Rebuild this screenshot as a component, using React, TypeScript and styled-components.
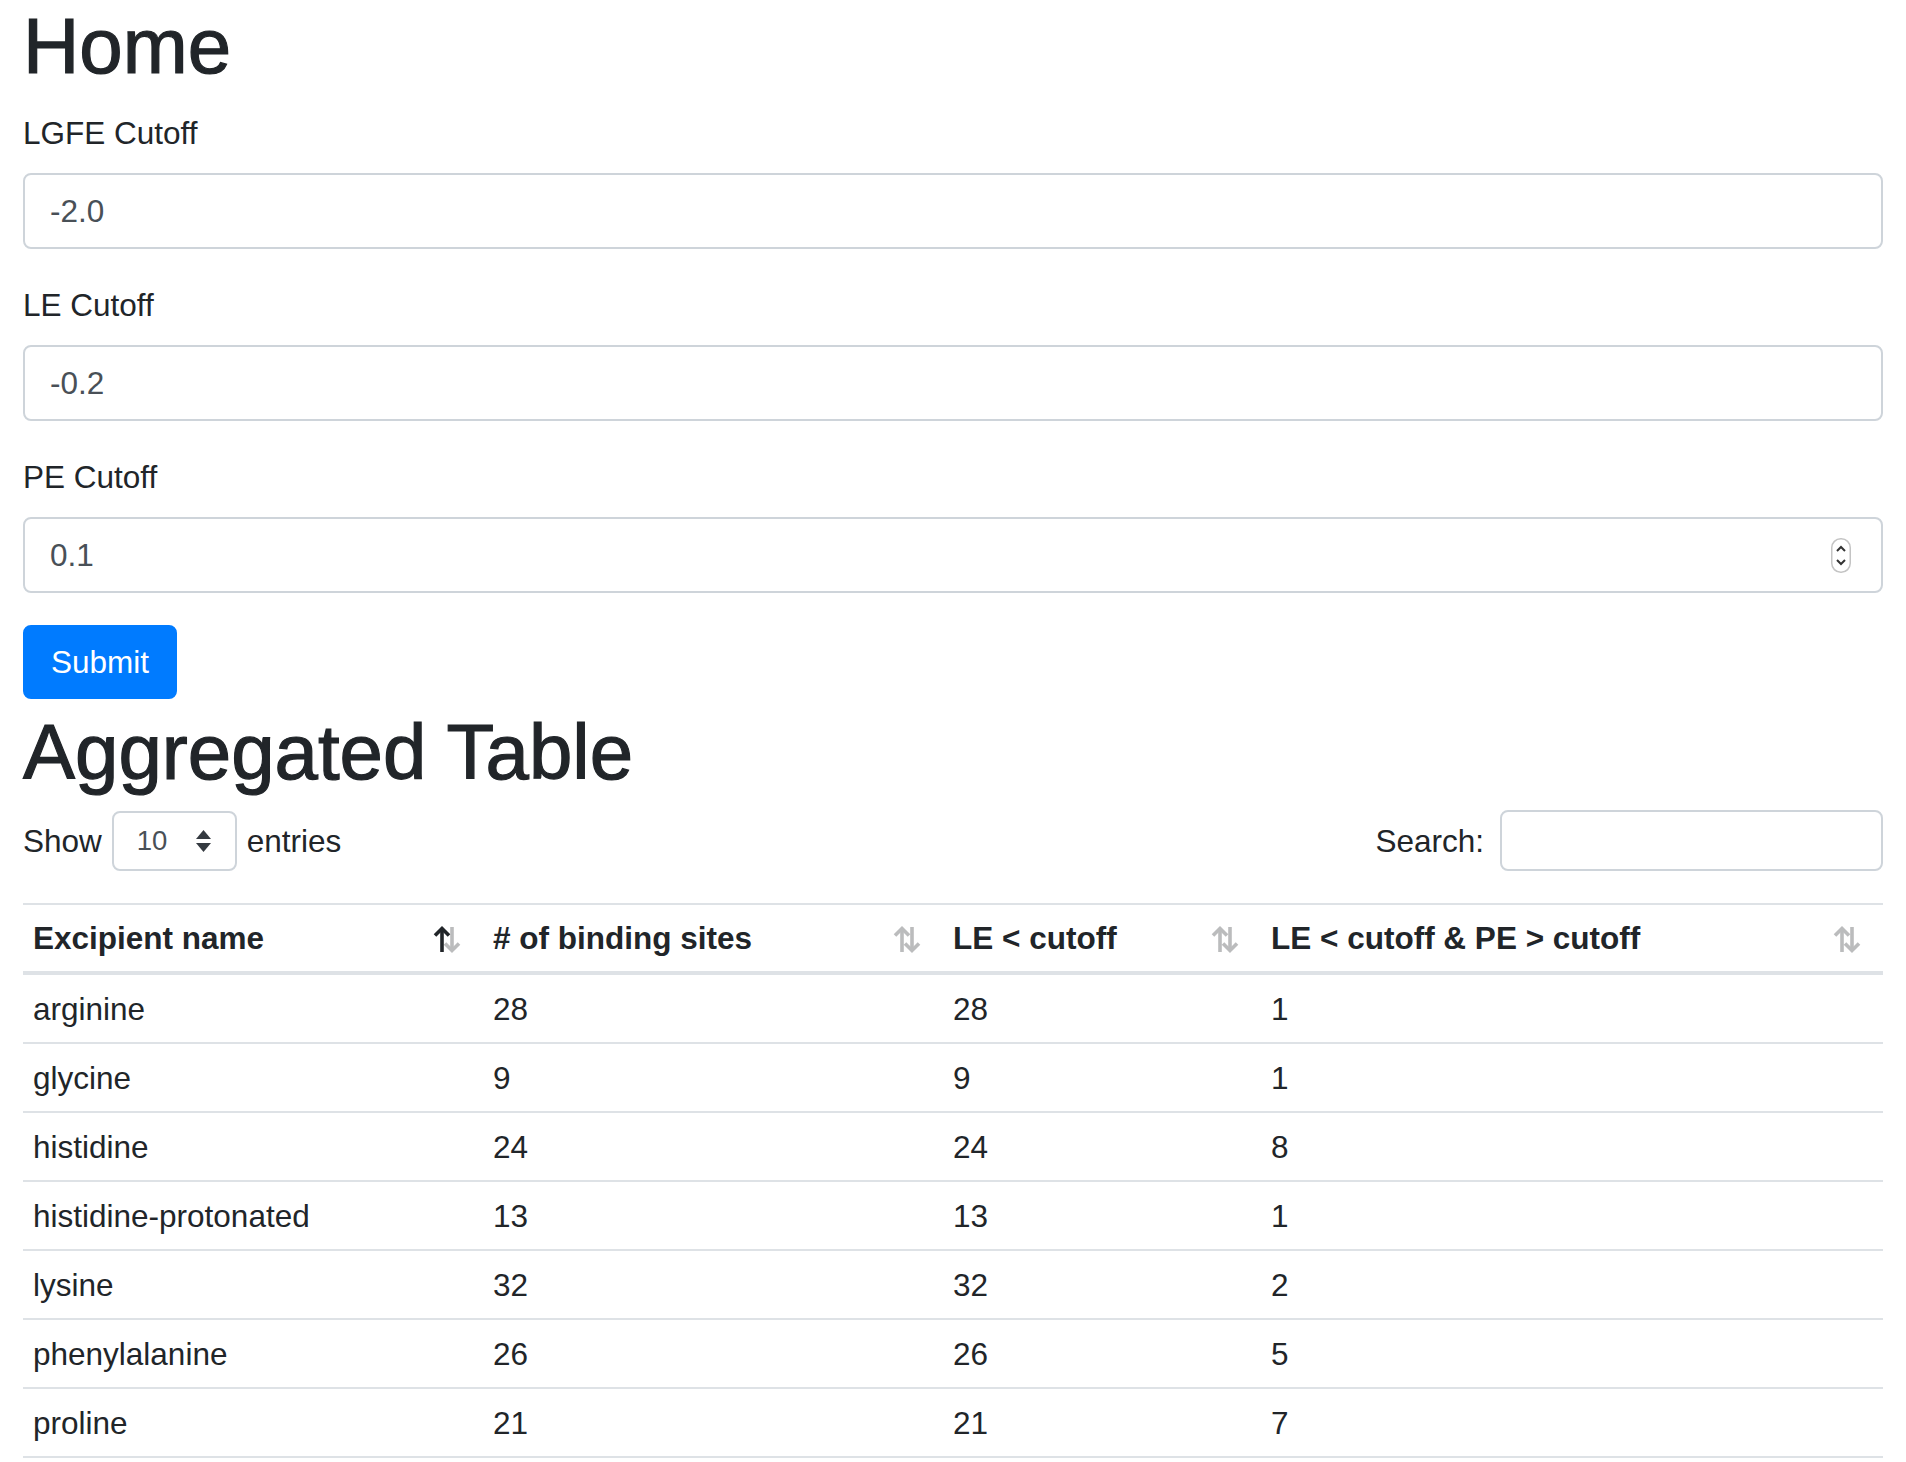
import React from "react";
import styled, { createGlobalStyle } from "styled-components";

const GlobalStyle = createGlobalStyle`
  * {
    box-sizing: border-box;
  }
  html,
  body {
    margin: 0;
    padding: 0;
    background: #ffffff;
  }
  body {
    font-family: "Liberation Sans", Arial, sans-serif;
    font-size: 31.5px;
    line-height: 48px;
    color: #212529;
  }
`;

const Page = styled.div`
  padding: 0 23px 0 23px;
`;

const Heading = styled.h1<{ $top?: number; $bottom?: number }>`
  margin: ${(p) => p.$top ?? 0}px 0 ${(p) => p.$bottom ?? 16}px;
  font-size: 78px;
  line-height: 93px;
  font-weight: 500;
  -webkit-text-stroke: 1.2px #212529;
`;

const FormGroup = styled.div`
  margin-bottom: 32px;
`;

const Label = styled.label`
  display: block;
  margin-bottom: 16px;
  line-height: 48px;
`;

const Field = styled.div`
  display: flex;
  align-items: center;
  height: 76px;
  padding: 0 30px 0 25px;
  border: 2px solid #ced4da;
  border-radius: 8px;
  background: #fff;
`;

const FieldInput = styled.input`
  flex: 1;
  min-width: 0;
  border: none;
  outline: none;
  padding: 0;
  background: transparent;
  font: inherit;
  color: #495057;
`;

const SubmitButton = styled.button`
  display: block;
  height: 74px;
  margin-top: 1px;
  padding: 0 26px;
  border: 2px solid #007bff;
  border-radius: 8px;
  background: #007bff;
  color: #ffffff;
  font: inherit;
  line-height: 48px;
`;

const ControlsRow = styled.div`
  display: flex;
  justify-content: space-between;
  align-items: center;
  height: 61px;
`;

const InlineLabel = styled.label`
  display: flex;
  align-items: center;
  gap: 10px;
`;

const SelectBox = styled.div`
  display: flex;
  align-items: center;
  justify-content: space-between;
  width: 125px;
  height: 60px;
  padding: 0 24px 0 23px;
  border: 2px solid #ced4da;
  border-radius: 8px;
  font-size: 27.5px;
  color: #495057;
`;

const SearchInput = styled.input`
  width: 383px;
  height: 61px;
  margin-left: 6px;
  padding: 0 16px;
  border: 2px solid #ced4da;
  border-radius: 8px;
  font: inherit;
  font-size: 27.5px;
  outline: none;
`;

const Table = styled.table`
  width: 100%;
  margin-top: 32px;
  border-collapse: collapse;
  table-layout: fixed;
`;

const HeadCell = styled.th<{ $width?: number }>`
  width: ${(p) => (p.$width ? `${p.$width}px` : "auto")};
  padding: 9px 10px;
  border-top: 2px solid #dee2e6;
  border-bottom: 4px solid #dee2e6;
  text-align: left;
  font-weight: 700;
  vertical-align: bottom;
`;

const HeadInner = styled.div`
  display: flex;
  align-items: center;
  justify-content: space-between;
`;

const Cell = styled.td`
  padding: 10px 10px 9px;
  border-bottom: 2px solid #dee2e6;
`;

const SortIconSvg = styled.svg`
  flex: none;
  margin-right: 11px;
  margin-top: 2px;
`;

const SortIcon = ({ active }: { active?: boolean }) => (
  <SortIconSvg width="30" height="30" viewBox="0 0 30 30">
    <g opacity={active ? 1 : 0.3} stroke="#212529" strokeWidth="3.6" fill="none">
      <path d="M10 28V5" />
      <path d="M3 11.5L10 4.5l7 7" />
    </g>
    <g opacity="0.3" stroke="#212529" strokeWidth="3.6" fill="none">
      <path d="M20 3v23" />
      <path d="M13 19.5l7 7 7-7" />
    </g>
  </SortIconSvg>
);

const SpinnerSvg = styled.svg`
  flex: none;
`;

const Spinner = () => (
  <SpinnerSvg width="20" height="35" viewBox="0 0 20 35">
    <rect x="0.75" y="0.75" width="18.5" height="33.5" rx="9" fill="#fff" stroke="#c4c4c4" strokeWidth="1.5" />
    <path d="M6 13l4-4 4 4" stroke="#333" strokeWidth="2" fill="none" />
    <path d="M6 22l4 4 4-4" stroke="#333" strokeWidth="2" fill="none" />
  </SpinnerSvg>
);

const SelectArrows = () => (
  <svg width="15" height="22" viewBox="0 0 15 22">
    <path d="M7.5 0L15 9H0z" fill="#343a40" />
    <path d="M7.5 22L15 13H0z" fill="#343a40" />
  </svg>
);

const cutoffs = [
  { label: "LGFE Cutoff", value: "-2.0" },
  { label: "LE Cutoff", value: "-0.2" },
  { label: "PE Cutoff", value: "0.1", spinner: true },
];

const columns = [
  { title: "Excipient name", width: 460, active: true },
  { title: "# of binding sites", width: 460 },
  { title: "LE < cutoff", width: 318 },
  { title: "LE < cutoff & PE > cutoff" },
];

const rows: [string, number, number, number][] = [
  ["arginine", 28, 28, 1],
  ["glycine", 9, 9, 1],
  ["histidine", 24, 24, 8],
  ["histidine-protonated", 13, 13, 1],
  ["lysine", 32, 32, 2],
  ["phenylalanine", 26, 26, 5],
  ["proline", 21, 21, 7],
];

const App = () => {
  return (
    <>
      <GlobalStyle />
      <Page>
        <Heading>Home</Heading>
        <form onSubmit={(e) => e.preventDefault()}>
          {cutoffs.map((c) => (
            <FormGroup key={c.label}>
              <Label>{c.label}</Label>
              <Field>
                <FieldInput defaultValue={c.value} />
                {c.spinner && <Spinner />}
              </Field>
            </FormGroup>
          ))}
          <SubmitButton type="submit">Submit</SubmitButton>
        </form>

        <Heading $top={7} $bottom={11}>
          Aggregated Table
        </Heading>
        <ControlsRow>
          <InlineLabel>
            Show
            <SelectBox>
              <span>10</span>
              <SelectArrows />
            </SelectBox>
            entries
          </InlineLabel>
          <InlineLabel>
            Search:
            <SearchInput />
          </InlineLabel>
        </ControlsRow>

        <Table>
          <thead>
            <tr>
              {columns.map((col) => (
                <HeadCell key={col.title} $width={col.width}>
                  <HeadInner>
                    <span>{col.title}</span>
                    <SortIcon active={col.active} />
                  </HeadInner>
                </HeadCell>
              ))}
            </tr>
          </thead>
          <tbody>
            {rows.map((r) => (
              <tr key={r[0]}>
                {r.map((v, i) => (
                  <Cell key={i}>{v}</Cell>
                ))}
              </tr>
            ))}
          </tbody>
        </Table>
      </Page>
    </>
  );
};

export default App;
